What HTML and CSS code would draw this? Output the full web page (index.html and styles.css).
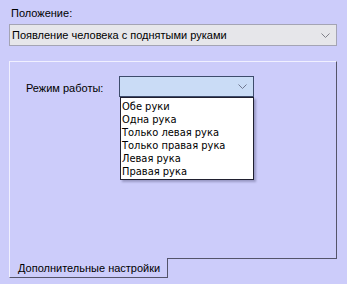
FILE: index.html
```html
<!DOCTYPE html>
<html lang="ru">
<head>
  <meta charset="UTF-8" />
  <title>Положение</title>
  <link rel="stylesheet" href="styles.css">
</head>
<body>
  <div class="field-label">Положение:</div>
  <div class="combo">
    <span class="combo-text">Появление человека с поднятыми руками</span>
    <svg class="chevron" width="9" height="5" viewBox="0 0 9 5"><path d="M0.5 0.5 L4.5 4.5 L8.5 0.5" fill="none" stroke="#808088" stroke-width="1"/></svg>
  </div>

  <div class="panel">
    <div class="mode-row">
      <span class="mode-label">Режим работы:</span>
      <div class="mode-wrap">
        <div class="mode-combo">
          <svg class="chevron" width="9" height="5" viewBox="0 0 9 5"><path d="M0.5 0.5 L4.5 4.5 L8.5 0.5" fill="none" stroke="#707890" stroke-width="1"/></svg>
        </div>
        <ul class="mode-list">
          <li>Обе руки</li>
          <li>Одна рука</li>
          <li>Только левая рука</li>
          <li>Только правая рука</li>
          <li>Левая рука</li>
          <li>Правая рука</li>
        </ul>
      </div>
    </div>
  </div>
  <div class="tab">Дополнительные настройки</div>
</body>
</html>
```

FILE: styles.css
```css
body {
  margin: 0;
  padding: 0;
  background: #ccccfa;
  font-family: "Liberation Sans", Arial, sans-serif;
  font-size: 11px;
  color: #000;
}
.field-label {
  padding: 7px 0 0 11px;
  height: 17px;
  line-height: 13px;
}
.combo {
  margin: 0 10px 0 9px;
  height: 20px;
  border: 1px solid #a4a4b4;
  background: #e6e6ea;
  display: flex;
  align-items: center;
  justify-content: space-between;
  padding: 0 6px 0 2px;
}
.combo-text {
  line-height: 20px;
}
.panel {
  margin: 15px 10px 0 9px;
  height: 182px;
  border-top: 1px solid #f0f0ff;
  border-left: 1px solid #f0f0ff;
  border-right: 1px solid #54546a;
  border-bottom: 1px solid #54546a;
  padding: 14px 0 0 16px;
}
.mode-row {
  display: flex;
  align-items: flex-start;
}
.mode-label {
  width: 93px;
  padding-top: 6px;
}
.mode-wrap {
  position: relative;
}
.mode-combo {
  width: 127px;
  height: 19px;
  border: 1px solid #3e4c6c;
  background: #cadcf6;
  display: flex;
  align-items: center;
  justify-content: flex-end;
  padding-right: 6px;
}
.mode-list {
  position: absolute;
  left: 1px;
  top: 21px;
  width: 131px;
  margin: 0;
  padding: 2px 0 1px 1px;
  list-style: none;
  background: #fff;
  border: 1px solid #202030;
  box-shadow: 2px 2px 2px rgba(60, 60, 100, 0.35);
  font-family: "DejaVu Sans Condensed", "Liberation Sans", sans-serif;
  font-size: 11px;
}
.mode-list li {
  height: 13px;
  line-height: 13px;
  white-space: nowrap;
}
.tab {
  position: relative;
  margin: -1px 0 0 9px;
  width: 149px;
  height: 19px;
  border-left: 1px solid #f0f0ff;
  border-right: 1px solid #54546a;
  border-bottom: 1px solid #54546a;
  background: #ccccfa;
  padding-left: 8px;
  line-height: 20px;
}
```
